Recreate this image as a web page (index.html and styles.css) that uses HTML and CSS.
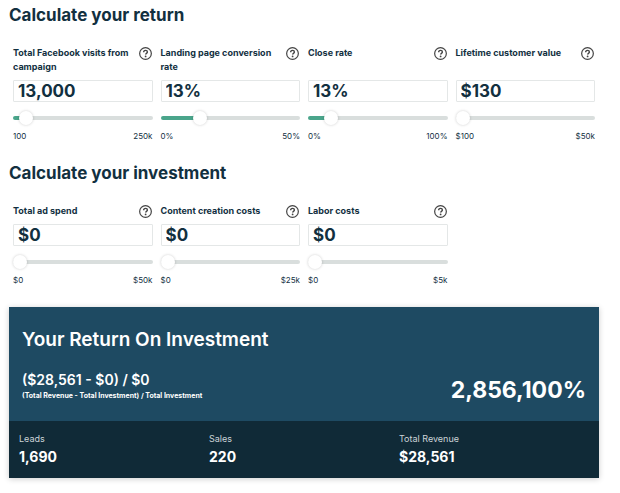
FILE: index.html
```html
<!DOCTYPE html>
<html lang="en">
<head>
    <meta charset="UTF-8">
    <meta name="viewport" content="width=device-width, initial-scale=1.0">
    <title>ROI Calculator</title>
    <link rel="stylesheet" href="styles.css">
</head>
<body>

    <svg class="icon-defs" aria-hidden="true">
        <symbol id="help-icon" viewBox="0 0 26 26">
            <circle cx="13" cy="13" r="11.7" fill="none" stroke="currentColor" stroke-width="2.4"></circle>
            <path d="M9.3 10.4c0-2.2 1.6-3.6 3.8-3.6s3.7 1.3 3.7 3.2c0 2.6-3.6 2.8-3.6 5.2" fill="none" stroke="currentColor" stroke-width="2.8"></path>
            <circle cx="13.2" cy="18.8" r="1.8" fill="currentColor"></circle>
        </symbol>
    </svg>

    <main class="calculator">
        <section>
            <h2>Calculate your return</h2>
            <div class="fields fields-tall">
                <div class="field">
                    <div class="field-head">
                        <label for="visits">Total Facebook visits from campaign</label>
                        <button class="help" type="button" aria-label="About Facebook visits"><svg><use href="#help-icon"></use></svg></button>
                    </div>
                    <input class="amount" id="visits" type="text" value="13,000">
                    <input class="slider" type="range" min="100" max="250000" value="13000" aria-label="Total Facebook visits" style="--fill: 5%">
                    <div class="scale"><span>100</span><span>250k</span></div>
                </div>
                <div class="field">
                    <div class="field-head">
                        <label for="conversion">Landing page conversion rate</label>
                        <button class="help" type="button" aria-label="About conversion rate"><svg><use href="#help-icon"></use></svg></button>
                    </div>
                    <input class="amount" id="conversion" type="text" value="13%">
                    <input class="slider" type="range" min="0" max="50" value="13" aria-label="Landing page conversion rate" style="--fill: 26%">
                    <div class="scale"><span>0%</span><span>50%</span></div>
                </div>
                <div class="field">
                    <div class="field-head">
                        <label for="close-rate">Close rate</label>
                        <button class="help" type="button" aria-label="About close rate"><svg><use href="#help-icon"></use></svg></button>
                    </div>
                    <input class="amount" id="close-rate" type="text" value="13%">
                    <input class="slider" type="range" min="0" max="100" value="13" aria-label="Close rate" style="--fill: 13%">
                    <div class="scale"><span>0%</span><span>100%</span></div>
                </div>
                <div class="field">
                    <div class="field-head">
                        <label for="lifetime">Lifetime customer value</label>
                        <button class="help" type="button" aria-label="About lifetime customer value"><svg><use href="#help-icon"></use></svg></button>
                    </div>
                    <input class="amount" id="lifetime" type="text" value="$130">
                    <input class="slider" type="range" min="100" max="50000" value="130" aria-label="Lifetime customer value" style="--fill: 0%">
                    <div class="scale"><span>$100</span><span>$50k</span></div>
                </div>
            </div>
        </section>

        <section>
            <h2>Calculate your investment</h2>
            <div class="fields">
                <div class="field">
                    <div class="field-head">
                        <label for="ad-spend">Total ad spend</label>
                        <button class="help" type="button" aria-label="About ad spend"><svg><use href="#help-icon"></use></svg></button>
                    </div>
                    <input class="amount" id="ad-spend" type="text" value="$0">
                    <input class="slider" type="range" min="0" max="50000" value="0" aria-label="Total ad spend" style="--fill: 0%">
                    <div class="scale"><span>$0</span><span>$50k</span></div>
                </div>
                <div class="field">
                    <div class="field-head">
                        <label for="content">Content creation costs</label>
                        <button class="help" type="button" aria-label="About content creation costs"><svg><use href="#help-icon"></use></svg></button>
                    </div>
                    <input class="amount" id="content" type="text" value="$0">
                    <input class="slider" type="range" min="0" max="25000" value="0" aria-label="Content creation costs" style="--fill: 0%">
                    <div class="scale"><span>$0</span><span>$25k</span></div>
                </div>
                <div class="field">
                    <div class="field-head">
                        <label for="labor">Labor costs</label>
                        <button class="help" type="button" aria-label="About labor costs"><svg><use href="#help-icon"></use></svg></button>
                    </div>
                    <input class="amount" id="labor" type="text" value="$0">
                    <input class="slider" type="range" min="0" max="5000" value="0" aria-label="Labor costs" style="--fill: 0%">
                    <div class="scale"><span>$0</span><span>$5k</span></div>
                </div>
            </div>
        </section>

        <section class="result">
            <div class="result-main">
                <h3>Your Return On Investment</h3>
                <div class="result-row">
                    <div>
                        <div class="formula">($28,561 - $0) / $0</div>
                        <div class="formula-note">(Total Revenue - Total Investment) / Total Investment</div>
                    </div>
                    <div class="roi">2,856,100%</div>
                </div>
            </div>
            <dl class="stats">
                <div>
                    <dt>Leads</dt>
                    <dd>1,690</dd>
                </div>
                <div>
                    <dt>Sales</dt>
                    <dd>220</dd>
                </div>
                <div>
                    <dt>Total Revenue</dt>
                    <dd>$28,561</dd>
                </div>
            </dl>
        </section>
    </main>

</body>
</html>
```
FILE: styles.css
```css
* {
    box-sizing: border-box;
}

body {
    margin: 0;
    font-family: Inter, "Open Sans", sans-serif;
    background-color: #fff;
    color: #12303f;
}

.icon-defs {
    display: none;
}

.calculator {
    padding: 4px 21px 14px 9px;
}

h2, h3, dl, dd {
    margin: 0;
}

h2 {
    font-size: 17px;
    line-height: 22px;
    font-weight: 700;
}

/* Input fields */
.fields {
    display: grid;
    grid-template-columns: repeat(4, 1fr);
    gap: 8px;
    padding: 20px 4px;
}

.field-head {
    display: flex;
    justify-content: space-between;
    align-items: flex-start;
    min-height: 14px;
    margin-bottom: 6px;
}

.fields-tall .field-head {
    min-height: 28px;
}

.field-head label {
    font-size: 9px;
    line-height: 14px;
    font-weight: 700;
}

.help {
    flex: none;
    width: 14px;
    height: 14px;
    padding: 0;
    border: none;
    background: none;
    color: #444;
    cursor: pointer;
}

.help svg {
    display: block;
    width: 13px;
    height: 13px;
}

.amount {
    display: block;
    width: 100%;
    height: 22px;
    padding: 0 4px;
    border: 1px solid #e4e7e7;
    border-radius: 1px;
    background-color: #fff;
    color: #12303f;
    font-family: inherit;
    font-size: 17px;
    font-weight: 700;
    outline: none;
}

.slider {
    -webkit-appearance: none;
    appearance: none;
    display: block;
    width: 100%;
    height: 14px;
    margin: 9px 0 5px;
    background: none;
    cursor: pointer;
}

.slider::-webkit-slider-runnable-track {
    height: 4px;
    border-radius: 2px;
    background: linear-gradient(to right, #4aa58b var(--fill), #d9dedd var(--fill));
}

.slider::-webkit-slider-thumb {
    -webkit-appearance: none;
    width: 14px;
    height: 14px;
    margin-top: -5px;
    border-radius: 50%;
    background-color: #fff;
    box-shadow: 0 0 3px rgba(0, 0, 0, 0.2);
}

.scale {
    display: flex;
    justify-content: space-between;
    font-size: 8px;
    line-height: 12px;
}

/* Result card */
.result {
    margin-top: 1px;
    background-color: #1e4a62;
    color: #fff;
    box-shadow: 0 1px 6px rgba(0, 0, 0, 0.2);
}

.result-main {
    padding: 21px 13px 15px;
}

.result h3 {
    font-size: 19px;
    line-height: 24px;
    font-weight: 600;
}

.result-row {
    display: flex;
    justify-content: space-between;
    align-items: flex-start;
    margin-top: 19px;
}

.formula {
    font-size: 14px;
    line-height: 18px;
    font-weight: 600;
}

.formula-note {
    font-size: 7px;
    line-height: 14px;
    font-weight: 700;
}

.roi {
    padding-top: 3px;
    font-size: 23px;
    line-height: 32px;
    font-weight: 700;
}

.stats {
    display: grid;
    grid-template-columns: repeat(3, 1fr);
    padding: 11px 10px 12px;
    background-color: #102a37;
}

.stats dt {
    font-size: 9px;
    line-height: 14px;
    color: #ccd4d8;
}

.stats dd {
    margin-top: 2px;
    font-size: 14px;
    line-height: 18px;
    font-weight: 700;
}
```
